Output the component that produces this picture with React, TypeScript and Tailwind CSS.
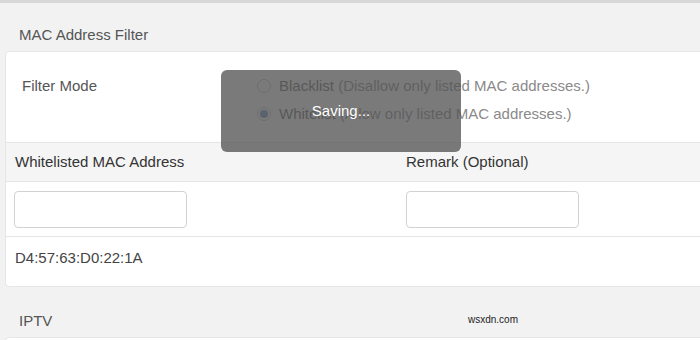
const font = { fontFamily: '"Liberation Sans", Arial, sans-serif' };

const Radio = ({ checked }: { checked?: boolean }) => (
  <span className="flex h-[14px] w-[14px] items-center justify-center rounded-full border border-[#c8c8c8] bg-white">
    {checked && <span className="h-[8px] w-[8px] rounded-full bg-[#6f93c9]" />}
  </span>
);

export default function App() {
  return (
    <div className="relative h-[340px] w-[700px] overflow-hidden bg-[#f2f2f2] text-[15px]" style={font}>
      <div className="h-[3px] bg-[#d8d8d8]" />

      <div className="pl-[19px] pt-[23px] pb-[8px] text-[#555] leading-[17px]">MAC Address Filter</div>

      <div className="ml-[5px] w-[720px] rounded-[4px] border border-[#e6e6e6] bg-white">
        <div className="flex h-[90px]">
          <div className="w-[251px] pl-[16px] pt-[25px] text-[#555] leading-[17px]">Filter Mode</div>
          <div className="flex flex-col gap-[11px] pt-[25px] text-[#8a8a8a]">
            <label className="flex items-center gap-[8px] leading-[17px]">
              <Radio />
              <span><span className="text-[#666]">Blacklist</span> (Disallow only listed MAC addresses.)</span>
            </label>
            <label className="flex items-center gap-[8px] leading-[17px]">
              <Radio checked />
              <span><span className="text-[#666]">Whitelist</span> (Allow only listed MAC addresses.)</span>
            </label>
          </div>
        </div>

        <div className="flex h-[40px] items-center border-y border-[#e6e6e6] bg-[#f5f5f5] text-[#333]">
          <div className="w-[400px] pl-[9px]">Whitelisted MAC Address</div>
          <div>Remark (Optional)</div>
        </div>

        <div className="flex h-[55px] items-center border-b border-[#e6e6e6]">
          <div className="w-[400px] pl-[8px]">
            <input className="h-[37px] w-[173px] rounded-[4px] border border-[#d2d2d2] bg-white" />
          </div>
          <div>
            <input className="h-[37px] w-[173px] rounded-[4px] border border-[#d2d2d2] bg-white" />
          </div>
        </div>

        <div className="h-[49px] pl-[9px] pt-[12px] leading-[17px] text-[#444]">D4:57:63:D0:22:1A</div>
      </div>

      <div className="pl-[19px] pt-[25px] text-[#555] leading-[17px]">IPTV</div>
      <div className="ml-[5px] mt-[8px] h-[20px] w-[720px] rounded-[4px] border border-[#e6e6e6] bg-white" />

      <div className="absolute left-[221px] top-[70px] flex h-[82px] w-[240px] items-center justify-center rounded-[6px] bg-[rgba(85,85,85,0.78)] text-white">
        Saving...
      </div>

      <div className="absolute left-[468px] top-[314px] text-[10px] leading-[12px] text-[#222]">
        wsxdn.com
      </div>
    </div>
  );
}
